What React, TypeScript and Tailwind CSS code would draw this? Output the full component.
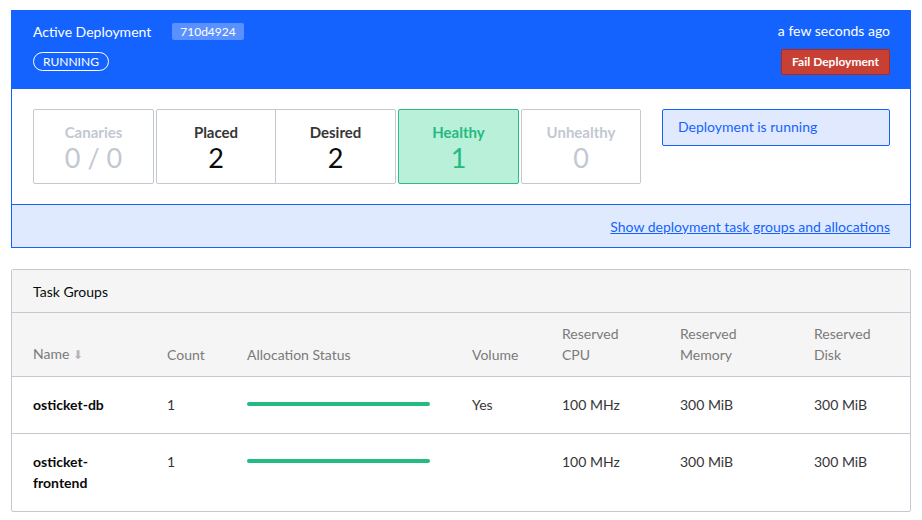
import React from "react";

const font = { fontFamily: "Lato, 'Noto Sans', sans-serif" };

function Stat({ label, value, muted, w }: { label: string; value: string; muted?: boolean; w: string }) {
  return (
    <div className={`flex flex-col items-center justify-center h-full pt-[2px] ${w}`}>
      <div className={`text-[15px] font-bold leading-[20px] ${muted ? "text-[#c2c8d2]" : "text-[#363636]"}`}>{label}</div>
      <div className={`text-[27px] leading-[32px] ${muted ? "text-[#c2c8d2]" : "text-[#0a0a0a]"}`}>{value}</div>
    </div>
  );
}

const cols = "grid grid-cols-[134px_80px_225px_90px_118px_134px_1fr] pl-[21px]";

function Row({ name, volume, last }: { name: React.ReactNode; volume: string; last?: boolean }) {
  return (
    <div className={`${cols} text-[14px] leading-[21px] text-[#363636] pt-[17px] pb-[18px] ${last ? "" : "border-b border-[#c4c9d1]"}`}>
      <div className="font-bold text-[#0a0a0a] pr-[24px]">{name}</div>
      <div>1</div>
      <div className="pt-[8px]"><div className="w-[183px] h-[4px] rounded-full bg-[#25ba81]" /></div>
      <div>{volume}</div>
      <div>100 MHz</div>
      <div>300 MiB</div>
      <div>300 MiB</div>
    </div>
  );
}

export default function App() {
  return (
    <div className="w-[922px] h-[520px] bg-white px-[11px] pt-[10px]" style={font}>
      <div className="border border-[#1563ff] w-[900px]">
        <div className="bg-[#1563ff] h-[78px] flex justify-between pl-[21px] pr-[20px] pt-[10px] text-white">
          <div>
            <div className="flex items-center h-[20px] text-[14px]">
              <span>Active Deployment</span>
              <span className="ml-[21px] bg-[#5b91ff] text-[12px] px-[8px] h-[17px] leading-[17px] rounded-[2px]">710d4924</span>
            </div>
            <div className="mt-[11px] inline-flex items-center h-[19px] px-[9px] border border-white rounded-full text-[12px] leading-[17px]">RUNNING</div>
          </div>
          <div className="flex flex-col items-end">
            <div className="h-[20px] text-[14px] leading-[20px]">a few seconds ago</div>
            <div className="mt-[8px] h-[26px] px-[10px] bg-[#c84034] border border-[#a8291e] rounded-[2px] text-[12px] font-bold leading-[24px]">Fail Deployment</div>
          </div>
        </div>
        <div className="bg-white h-[115px] flex pl-[21px] pr-[20px] pt-[20px]">
          <div className="flex gap-[2px] h-[75px]">
            <div className="border border-[#c4c9d1] rounded-[2px]"><Stat label="Canaries" value="0 / 0" muted w="w-[119px]" /></div>
            <div className="border border-[#c4c9d1] rounded-[2px] flex">
              <Stat label="Placed" value="2" w="w-[118px]" />
              <div className="w-px bg-[#c4c9d1]" />
              <Stat label="Desired" value="2" w="w-[119px]" />
            </div>
            <div className="border border-[#2eba84] bg-[#b9f0da] rounded-[2px] flex flex-col items-center justify-center pt-[2px] w-[121px]">
              <div className="text-[15px] font-bold leading-[20px] text-[#25ba81]">Healthy</div>
              <div className="text-[27px] leading-[32px] text-[#25ba81]">1</div>
            </div>
            <div className="border border-[#c4c9d1] rounded-[2px]"><Stat label="Unhealthy" value="0" muted w="w-[118px]" /></div>
          </div>
          <div className="ml-auto w-[228px] h-[37px] border border-[#1563ff] bg-[#e0e9fe] rounded-[2px] text-[#1563ff] text-[14px] pl-[15px] pt-[7px] leading-[20px]">
            Deployment is running
          </div>
        </div>
        <div className="bg-[#e0eafe] border-t border-[#1563ff] h-[43px] flex items-center justify-end pr-[20px]">
          <span className="text-[#1563ff] text-[14px] underline">Show deployment task groups and allocations</span>
        </div>
      </div>

      <div className="mt-[21px] w-[900px] border border-[#c4c9d1] rounded-[2px]">
        <div className="bg-[#f5f5f5] h-[43px] flex items-center pl-[21px] text-[14px] text-[#0a0a0a] border-b border-[#c4c9d1]">Task Groups</div>
        <div className={`${cols} bg-[#f5f5f5] text-[14px] leading-[21px] text-[#7a7a7a] pt-[10px] pb-[11px] items-end border-b border-[#c4c9d1]`}>
          <div>Name <span className="text-[#b5b5b5] text-[12px]">⬇</span></div>
          <div>Count</div>
          <div>Allocation Status</div>
          <div>Volume</div>
          <div>Reserved<br />CPU</div>
          <div>Reserved<br />Memory</div>
          <div>Reserved<br />Disk</div>
        </div>
        <Row name="osticket-db" volume="Yes" />
        <Row name={<>osticket-<br />frontend</>} volume="" last />
      </div>
    </div>
  );
}
